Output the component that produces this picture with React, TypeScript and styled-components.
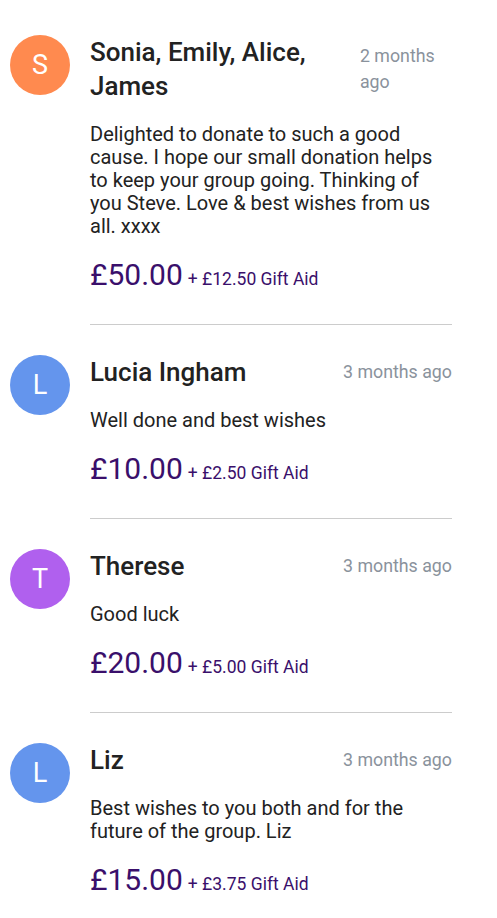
import styled, { createGlobalStyle } from "styled-components";

type Donation = {
  initial: string;
  colour: string;
  name: string;
  time: string;
  message: string;
  amount: string;
  giftAid: string;
};

const donations: Donation[] = [
  {
    initial: "S",
    colour: "#ff8a4f",
    name: "Sonia, Emily, Alice, James",
    time: "2 months ago",
    message:
      "Delighted to donate to such a good cause. I hope our small donation helps to keep your group going. Thinking of you Steve. Love & best wishes from us all. xxxx",
    amount: "£50.00",
    giftAid: "+ £12.50 Gift Aid",
  },
  {
    initial: "L",
    colour: "#6495ed",
    name: "Lucia Ingham",
    time: "3 months ago",
    message: "Well done and best wishes",
    amount: "£10.00",
    giftAid: "+ £2.50 Gift Aid",
  },
  {
    initial: "T",
    colour: "#b060ee",
    name: "Therese",
    time: "3 months ago",
    message: "Good luck",
    amount: "£20.00",
    giftAid: "+ £5.00 Gift Aid",
  },
  {
    initial: "L",
    colour: "#6495ed",
    name: "Liz",
    time: "3 months ago",
    message: "Best wishes to you both and for the future of the group. Liz",
    amount: "£15.00",
    giftAid: "+ £3.75 Gift Aid",
  },
];

export default function App() {
  return (
    <>
      <GlobalStyle />
      <List>
        {donations.map((d, i) => (
          <Item key={i}>
            <Avatar $bg={d.colour}>{d.initial}</Avatar>
            <Body $last={i === donations.length - 1}>
              <Header>
                <Name>{d.name}</Name>
                <Time>{d.time}</Time>
              </Header>
              <Message>{d.message}</Message>
              <AmountRow>
                <Amount>{d.amount}</Amount>
                <GiftAid>{d.giftAid}</GiftAid>
              </AmountRow>
            </Body>
          </Item>
        ))}
      </List>
    </>
  );
}

const GlobalStyle = createGlobalStyle`
  body {
    margin: 0;
    background: #fff;
    font-family: Roboto, "Liberation Sans", sans-serif;
  }
`;

const List = styled.div`
  display: flex;
  flex-direction: column;
  gap: 30px;
  padding: 35px 45px 0 10px;
`;

const Item = styled.div`
  display: flex;
  gap: 20px;
`;

const Avatar = styled.div<{ $bg: string }>`
  flex: 0 0 60px;
  width: 60px;
  height: 60px;
  border-radius: 50%;
  background-color: ${(p) => p.$bg};
  color: #fff;
  font-size: 27px;
  display: flex;
  align-items: center;
  justify-content: center;
`;

const Body = styled.div<{ $last: boolean }>`
  flex: 1;
  min-width: 0;
  padding-bottom: 29px;
  border-bottom: ${(p) => (p.$last ? "none" : "1px solid #cccccc")};
`;

const Header = styled.div`
  display: flex;
  align-items: center;
  justify-content: space-between;
  gap: 16px;
`;

const Name = styled.div`
  flex: 1 1 auto;
  font-size: 26px;
  font-weight: 500;
  line-height: 34px;
  color: #222222;
`;

const Time = styled.div`
  flex: 0 1 auto;
  font-size: 17.8px;
  line-height: 26px;
  color: #8a929c;
`;

const Message = styled.p`
  margin: 20px 0 0;
  font-size: 20px;
  line-height: 23px;
  color: #222222;
`;

const AmountRow = styled.div`
  margin-top: 17px;
  display: flex;
  align-items: baseline;
  gap: 5px;
  color: #3a0f6b;
`;

const Amount = styled.span`
  font-size: 30px;
  line-height: 40px;
`;

const GiftAid = styled.span`
  font-size: 17.5px;
`;
